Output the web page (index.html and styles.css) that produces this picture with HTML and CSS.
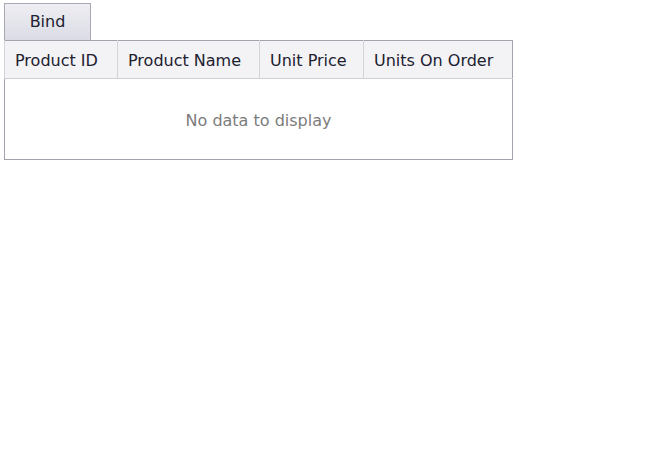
FILE: index.html
```html
<!DOCTYPE html>
<html>
<head>
<meta charset="utf-8">
<link rel="stylesheet" href="styles.css">
</head>
<body>
<div class="page">
  <button class="bind-btn" type="button">Bind</button>
  <table class="grid">
    <colgroup>
      <col class="c1"><col class="c2"><col class="c3"><col class="c4">
    </colgroup>
    <thead>
      <tr>
        <th>Product ID</th>
        <th>Product Name</th>
        <th>Unit Price</th>
        <th>Units On Order</th>
      </tr>
    </thead>
    <tbody>
      <tr><td class="empty" colspan="4">No data to display</td></tr>
    </tbody>
  </table>
</div>
</body>
</html>
```
FILE: styles.css
```css
html, body {
  margin: 0;
  padding: 0;
  background: #ffffff;
}
.page {
  padding: 3px 0 0 4px;
  font-family: "DejaVu Sans", Verdana, sans-serif;
  font-size: 16px;
  color: #202030;
}
.bind-btn {
  display: block;
  box-sizing: border-box;
  width: 87px;
  height: 37px;
  margin: 0;
  padding: 0 0 1px 0;
  border: 1px solid #a9a9b5;
  border-bottom: none;
  background: linear-gradient(#eeeef2, #dcdce6);
  font: inherit;
  color: #202030;
}
.grid {
  border-collapse: collapse;
  table-layout: fixed;
  width: 508px;
  border: 1px solid #a3a3ad;
}
.c1 { width: 113px; }
.c2 { width: 142px; }
.c3 { width: 104px; }
.c4 { width: 149px; }
.grid th {
  height: 38px;
  padding: 1px 0 0 10px;
  text-align: left;
  font-weight: normal;
  background: #f3f3f5;
  border-left: 1px solid #d3d3da;
  border-bottom: 1px solid #cfcfd7;
  box-sizing: border-box;
  white-space: nowrap;
}
.grid td.empty {
  height: 78px;
  text-align: center;
  color: #7c7c7c;
  padding: 2px 0 0 0;
}
```
